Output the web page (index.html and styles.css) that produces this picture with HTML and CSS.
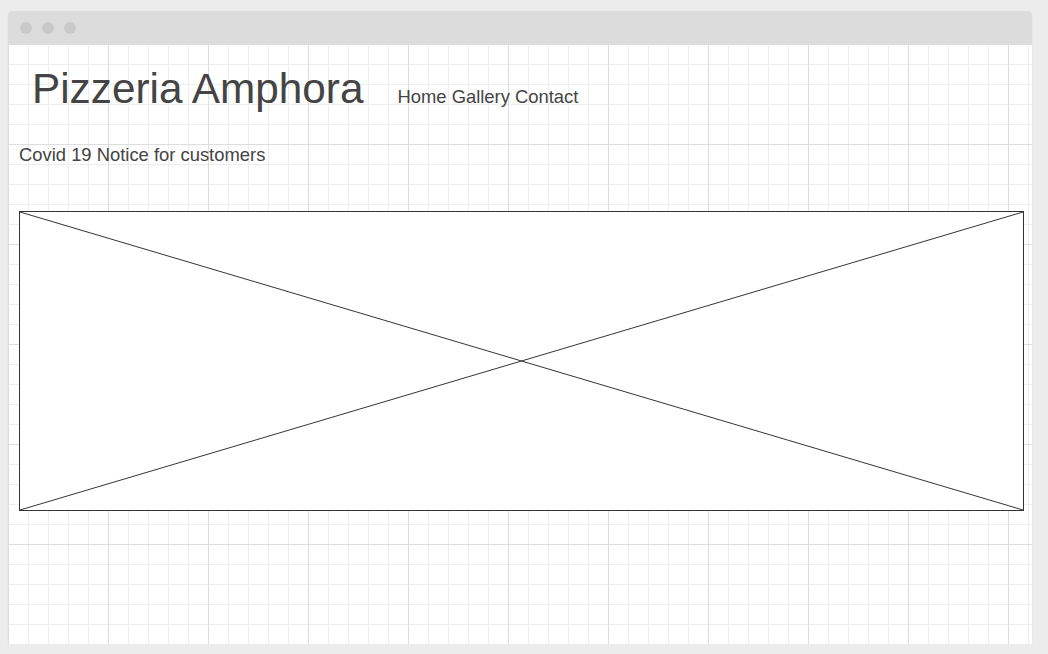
FILE: index.html
```html
<!DOCTYPE html>
<html>
<head>
<meta charset="utf-8">
<link rel="stylesheet" href="styles.css">
</head>
<body>
<div class="window">
  <div class="titlebar">
    <span class="dot"></span><span class="dot"></span><span class="dot"></span>
  </div>
  <div class="content">
    <div class="header">
      <h1 class="title">Pizzeria Amphora</h1>
      <nav class="nav">Home Gallery Contact</nav>
    </div>
    <p class="notice">Covid 19 Notice for customers</p>
    <div class="placeholder">
      <svg class="cross" viewBox="0 0 1004 298" preserveAspectRatio="none">
        <line x1="0" y1="0" x2="1004" y2="298" />
        <line x1="0" y1="298" x2="1004" y2="0" />
      </svg>
    </div>
  </div>
</div>
</body>
</html>
```

FILE: styles.css
```css
html, body {
  margin: 0;
  padding: 0;
  background: #ececec;
  font-family: "Liberation Sans", Arial, sans-serif;
}
.window {
  margin: 11px 0 0 8px;
  width: 1024px;
  height: 633px;
  display: flex;
  flex-direction: column;
  border-radius: 5px 5px 0 0;
  overflow: hidden;
  box-shadow: 0 0 1px rgba(0,0,0,0.15);
}
.titlebar {
  height: 33px;
  background: #dcdcdc;
  display: flex;
  align-items: center;
  gap: 10px;
  padding-left: 12px;
  flex: none;
}
.dot {
  width: 12px;
  height: 12px;
  border-radius: 50%;
  background: #c9c9c9;
}
.content {
  flex: 1;
  background-color: #fff;
  background-image:
    linear-gradient(to right, #dedede 1px, transparent 1px),
    linear-gradient(to bottom, #dedede 1px, transparent 1px),
    linear-gradient(to right, #eeeeee 1px, transparent 1px),
    linear-gradient(to bottom, #eeeeee 1px, transparent 1px);
  background-size: 100px 100px, 100px 100px, 20px 20px, 20px 20px;
  background-position: 100px 100px, 100px 100px, 20px 20px, 20px 20px;
  padding: 0 8px 0 11px;
  color: #444;
}
.header {
  display: flex;
  align-items: baseline;
  padding-left: 13px;
  margin-top: 20px;
}
.title {
  margin: 0;
  font-weight: normal;
  font-size: 42.3px;
  line-height: 50px;
  color: #444;
}
.nav {
  margin-left: 34px;
  font-size: 18.4px;
  color: #444;
}
.notice {
  margin: 31px 0 0 0;
  font-size: 18.4px;
  line-height: 20px;
}
.placeholder {
  margin-top: 46px;
  width: 1003px;
  height: 298px;
  border: 1px solid #333;
  background: #fff;
}
.cross {
  display: block;
  width: 100%;
  height: 100%;
}
.cross line {
  stroke: #333;
  stroke-width: 1;
}
```
